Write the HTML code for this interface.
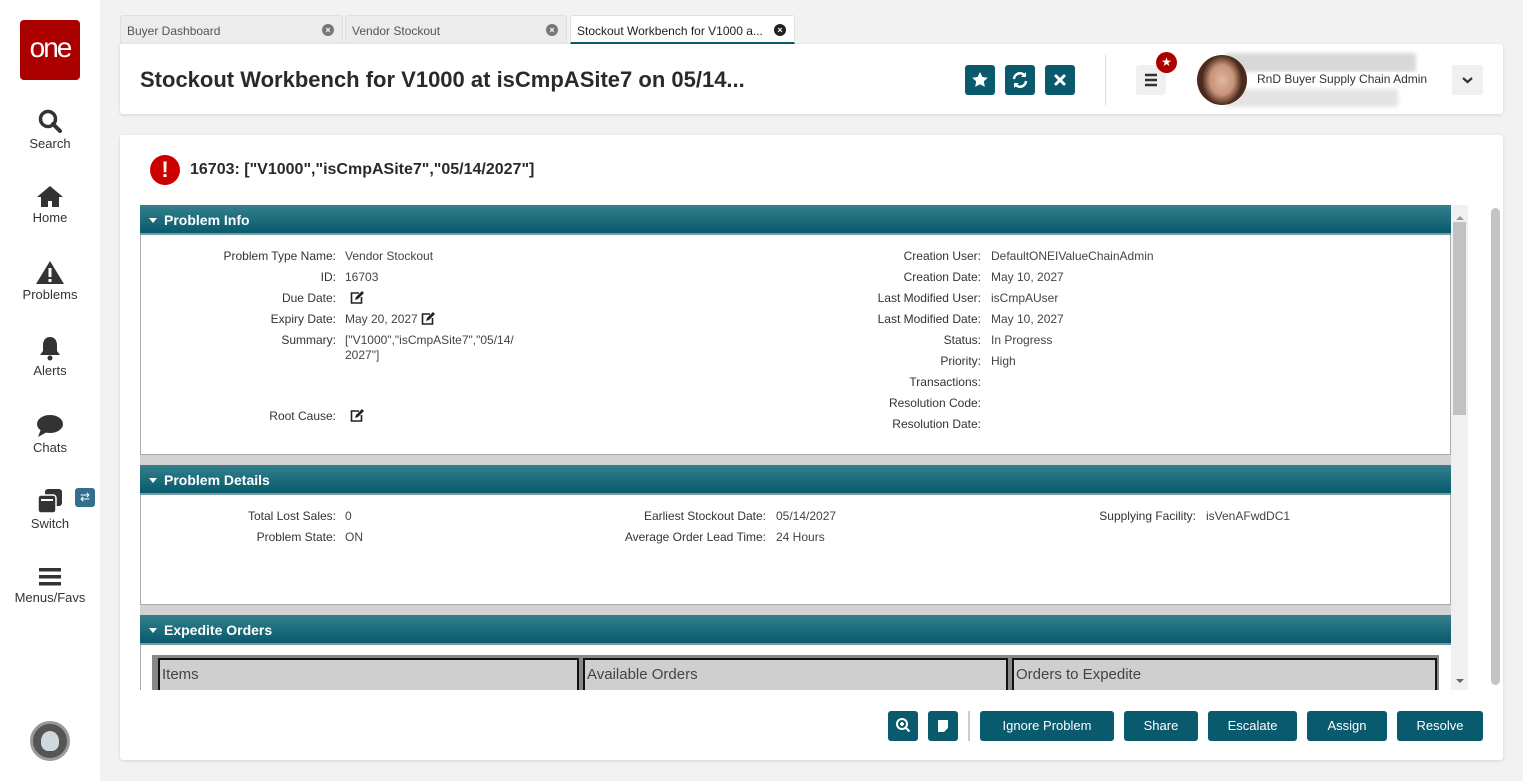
<!DOCTYPE html>
<html><head><meta charset="utf-8"><style>
*{box-sizing:border-box;margin:0;padding:0}
body{width:1523px;height:781px;background:#f2f2f2;font-family:"Liberation Sans",sans-serif;position:relative;overflow:hidden;color:#333}
.a{position:absolute}
.side{left:0;top:0;width:100px;height:781px;background:#fff}
.nav{position:absolute;left:0;width:100px;text-align:center;font-size:13px;color:#333}
.nav svg{display:block;margin:0 auto 2px}
.tab{top:15px;height:29px;background:#ececec;border:1px solid #e0e0e0;border-bottom:none;border-radius:3px 3px 0 0;font-size:12px;color:#555;padding:8px 6px}
.tx{position:absolute;right:8px;top:8px;width:12px;height:12px;border-radius:50%;background:#777;color:#fff;font-size:9px;line-height:12px;text-align:center;font-weight:bold}
.card{background:#fff;border-radius:3px;box-shadow:0 1px 3px rgba(0,0,0,.12)}
.tb{width:30px;height:30px;border-radius:3px;background:#0a5a6e;top:65px}
.hdr{left:140px;width:1311px;height:30px;background:linear-gradient(#34808c,#075a6d);color:#fff;font-size:14px;font-weight:bold;padding:7px 0 0 24px;border-bottom:2px solid #7a9aa2}
.hdr:before{content:"";position:absolute;left:9px;top:13px;border:4px solid transparent;border-top:5px solid #fff}
.body{left:140px;width:1311px;background:#fff;border:1px solid #aaa;border-top:none}
.gap{left:140px;width:1311px;background:#d3d3d3}
.l{position:absolute;width:300px;font-size:12px;color:#333;text-align:right;white-space:nowrap}
.v{position:absolute;font-size:12px;color:#444;white-space:nowrap}
.btn{top:711px;height:30px;background:#0a5a6e;color:#fff;font-size:13px;border-radius:3px;text-align:center;line-height:30px}
.cell{top:658px;height:32px;background:#cfcfcf;border:2px solid #111;border-bottom:none;font-size:15px;color:#444;padding:6px 0 0 2px}
.ed{display:inline-block;vertical-align:-2px}
</style></head><body>
<div class="a side"></div>
<div class="a" style="left:20px;top:20px;width:60px;height:60px;background:#a00;border-radius:4px;color:#fff;font-size:28px;text-align:center;line-height:56px;letter-spacing:-2px">one</div>
<div class="nav" style="top:108px"><svg width="26" height="26" viewBox="0 0 26 26"><circle cx="11" cy="11" r="7.5" fill="none" stroke="#333" stroke-width="3.5"/><path d="M16 16l7 7" stroke="#333" stroke-width="4" stroke-linecap="round"/></svg>Search</div>
<div class="nav" style="top:184px"><svg width="28" height="24" viewBox="0 0 28 24"><path d="M14 2L1 13h4v10h7v-6h4v6h7V13h4z" fill="#333"/></svg>Home</div>
<div class="nav" style="top:260px"><svg width="30" height="25" viewBox="0 0 30 25"><path d="M15 1L1 24h28z" fill="#333"/><rect x="13.5" y="8" width="3" height="9" fill="#fff"/><rect x="13.5" y="19" width="3" height="3" fill="#fff"/></svg>Problems</div>
<div class="nav" style="top:336px"><svg width="24" height="25" viewBox="0 0 24 25"><path d="M12 1c-5 0-7 4-7 8v6l-3 4h20l-3-4V9c0-4-2-8-7-8z" fill="#333"/><circle cx="12" cy="22" r="2.5" fill="#333"/></svg>Alerts</div>
<div class="nav" style="top:414px"><svg width="28" height="24" viewBox="0 0 28 24"><ellipse cx="14" cy="10" rx="13" ry="9" fill="#333"/><path d="M5 15l-3 8 9-5z" fill="#333"/></svg>Chats</div>
<div class="nav" style="top:488px"><svg width="28" height="26" viewBox="0 0 28 26"><rect x="9" y="1" width="17" height="17" rx="3" fill="#333"/><rect x="2" y="7" width="18" height="18" rx="3" fill="#333" stroke="#fff" stroke-width="1.5"/><rect x="5" y="11" width="12" height="2" fill="#fff"/></svg>Switch</div>
<div class="a" style="left:75px;top:488px;width:20px;height:19px;background:#336e8c;border-radius:3px;color:#fff;font-size:12px;text-align:center;line-height:19px">⇄</div>
<div class="nav" style="top:566px"><svg width="24" height="22" viewBox="0 0 24 22"><rect x="1" y="2" width="22" height="3.5" fill="#333"/><rect x="1" y="9" width="22" height="3.5" fill="#333"/><rect x="1" y="16" width="22" height="3.5" fill="#333"/></svg>Menus/Favs</div>
<div class="a" style="left:30px;top:721px;width:40px;height:40px;border-radius:50%;background:#555;border:3px solid #999"><div style="margin:7px auto;width:18px;height:20px;border-radius:50% 50% 40% 40%;background:#cfd8dc"></div></div>

<div class="a tab" style="left:120px;width:223px">Buyer Dashboard<span class="tx">×</span></div>
<div class="a tab" style="left:345px;width:222px">Vendor Stockout<span class="tx">×</span></div>
<div class="a tab" style="left:570px;width:225px;background:#fff;color:#222;border-bottom:2px solid #0a5a6e">Stockout Workbench for V1000 a...<span class="tx" style="background:#222">×</span></div>

<div class="a card" style="left:120px;top:44px;width:1383px;height:70px;border-radius:0 3px 3px 3px"></div>
<div class="a" style="left:140px;top:67px;font-size:22px;font-weight:bold;color:#2a2a2a">Stockout Workbench for V1000 at isCmpASite7 on 05/14...</div>
<div class="a tb" style="left:965px"><svg width="30" height="30" viewBox="0 0 30 30"><path d="M15 7l2.4 5 5.4.7-4 3.7 1 5.4-4.8-2.6-4.8 2.6 1-5.4-4-3.7 5.4-.7z" fill="#fff"/></svg></div>
<div class="a tb" style="left:1005px"><svg width="30" height="30" viewBox="0 0 30 30"><path d="M9 14a6 6 0 0 1 11-3M21 16a6 6 0 0 1-11 3" fill="none" stroke="#fff" stroke-width="2.5"/><path d="M21 7v5h-5zM9 23v-5h5z" fill="#fff"/></svg></div>
<div class="a tb" style="left:1045px"><svg width="30" height="30" viewBox="0 0 30 30"><path d="M11 11l8 8M19 11l-8 8" stroke="#fff" stroke-width="3" stroke-linecap="round"/></svg></div>
<div class="a" style="left:1105px;top:55px;width:1px;height:50px;background:#ddd"></div>
<div class="a" style="left:1136px;top:65px;width:30px;height:30px;background:#f0f0f0;border-radius:3px"><svg width="30" height="30" viewBox="0 0 30 30"><path d="M9 10h12M9 15h12M9 20h12" stroke="#333" stroke-width="2.5"/></svg></div>
<div class="a" style="left:1156px;top:52px;width:21px;height:21px;border-radius:50%;background:#a00;color:#fff;font-size:12px;text-align:center;line-height:21px">★</div>
<div class="a" style="left:1226px;top:53px;width:190px;height:19px;background:#d8d8d8;filter:blur(2px)"></div>
<div class="a" style="left:1226px;top:89px;width:172px;height:18px;background:#e4e4e4;filter:blur(2px)"></div>
<div class="a" style="left:1197px;top:55px;width:50px;height:50px;border-radius:50%;background:radial-gradient(ellipse 40% 50% at 50% 50%,#e2b8a0 0,#c89278 60%,#4a2a1c 100%)"></div>
<div class="a" style="left:1257px;top:72px;font-size:12px;color:#333;background:#fff">RnD Buyer Supply Chain Admin</div>
<div class="a" style="left:1452px;top:65px;width:31px;height:30px;background:#f0f0f0;border-radius:3px"><svg width="31" height="30" viewBox="0 0 31 30"><path d="M11 13l4.5 4 4.5-4" fill="none" stroke="#333" stroke-width="2.2"/></svg></div>

<div class="a card" style="left:120px;top:135px;width:1383px;height:625px"></div>
<div class="a" style="left:150px;top:155px;width:30px;height:30px;border-radius:50%;background:#c00;color:#fff;font-size:22px;font-weight:bold;text-align:center;line-height:30px">!</div>
<div class="a" style="left:190px;top:161px;font-size:16px;font-weight:bold;color:#2a2a2a">16703: ["V1000","isCmpASite7","05/14/2027"]</div>

<div class="a hdr" style="top:205px">Problem Info</div>
<div class="a body" style="top:235px;height:220px"></div>
<div class="a gap" style="top:455px;height:10px"></div>
<div class="a hdr" style="top:465px">Problem Details</div>
<div class="a body" style="top:495px;height:110px"></div>
<div class="a gap" style="top:605px;height:10px"></div>
<div class="a hdr" style="top:615px">Expedite Orders</div>
<div class="a" style="left:140px;top:645px;width:1311px;height:45px;background:#fff;border-left:1px solid #aaa"></div>
<div class="a" style="left:152px;top:655px;width:1287px;height:35px;background:#888"></div>
<div class="a cell" style="left:158px;width:421px">Items</div>
<div class="a cell" style="left:583px;width:425px">Available Orders</div>
<div class="a cell" style="left:1012px;width:425px">Orders to Expedite</div>
<div class="a" style="left:1451px;top:205px;width:17px;height:485px;background:#f0f0f0"></div>
<div class="a" style="left:1453px;top:222px;width:13px;height:193px;background:#c1c1c1"></div>
<div class="a" style="left:1456px;top:212px;border:4px solid transparent;border-bottom:4px solid #999"></div>
<div class="a" style="left:1456px;top:679px;border:4px solid transparent;border-top:4px solid #666"></div>
<div class="a" style="left:1491px;top:208px;width:9px;height:477px;background:#c4c4c4;border-radius:5px"></div>

<div class="l" style="left:36px;top:249px">Problem Type Name:</div><div class="v" style="left:345px;top:249px">Vendor Stockout</div>
<div class="l" style="left:36px;top:270px">ID:</div><div class="v" style="left:345px;top:270px">16703</div>
<div class="l" style="left:36px;top:291px">Due Date:</div><div class="v" style="left:350px;top:291px"><svg class="ed" width="14" height="13" viewBox="0 0 14 13"><path d="M9 2H1.5v10h10V6" fill="none" stroke="#222" stroke-width="1.6"/><path d="M5 9l1-3 6-6 2 2-6 6z" fill="#222"/></svg></div>
<div class="l" style="left:36px;top:312px">Expiry Date:</div><div class="v" style="left:345px;top:312px">May 20, 2027 <svg class="ed" width="14" height="13" viewBox="0 0 14 13"><path d="M9 2H1.5v10h10V6" fill="none" stroke="#222" stroke-width="1.6"/><path d="M5 9l1-3 6-6 2 2-6 6z" fill="#222"/></svg></div>
<div class="l" style="left:36px;top:333px">Summary:</div><div class="v" style="left:345px;top:333px;line-height:15px">["V1000","isCmpASite7","05/14/<br>2027"]</div>
<div class="l" style="left:36px;top:409px">Root Cause:</div><div class="v" style="left:350px;top:409px"><svg class="ed" width="14" height="13" viewBox="0 0 14 13"><path d="M9 2H1.5v10h10V6" fill="none" stroke="#222" stroke-width="1.6"/><path d="M5 9l1-3 6-6 2 2-6 6z" fill="#222"/></svg></div>
<div class="l" style="left:681px;top:249px">Creation User:</div><div class="v" style="left:991px;top:249px">DefaultONEIValueChainAdmin</div>
<div class="l" style="left:681px;top:270px">Creation Date:</div><div class="v" style="left:991px;top:270px">May 10, 2027</div>
<div class="l" style="left:681px;top:291px">Last Modified User:</div><div class="v" style="left:991px;top:291px">isCmpAUser</div>
<div class="l" style="left:681px;top:312px">Last Modified Date:</div><div class="v" style="left:991px;top:312px">May 10, 2027</div>
<div class="l" style="left:681px;top:333px">Status:</div><div class="v" style="left:991px;top:333px">In Progress</div>
<div class="l" style="left:681px;top:354px">Priority:</div><div class="v" style="left:991px;top:354px">High</div>
<div class="l" style="left:681px;top:375px">Transactions:</div>
<div class="l" style="left:681px;top:396px">Resolution Code:</div>
<div class="l" style="left:681px;top:417px">Resolution Date:</div>
<div class="l" style="left:36px;top:509px">Total Lost Sales:</div><div class="v" style="left:345px;top:509px">0</div>
<div class="l" style="left:36px;top:530px">Problem State:</div><div class="v" style="left:345px;top:530px">ON</div>
<div class="l" style="left:466px;top:509px">Earliest Stockout Date:</div><div class="v" style="left:776px;top:509px">05/14/2027</div>
<div class="l" style="left:466px;top:530px">Average Order Lead Time:</div><div class="v" style="left:776px;top:530px">24 Hours</div>
<div class="l" style="left:896px;top:509px">Supplying Facility:</div><div class="v" style="left:1206px;top:509px">isVenAFwdDC1</div>

<div class="a btn" style="left:888px;width:30px"><svg width="30" height="30" viewBox="0 0 30 30"><circle cx="14" cy="13" r="5" fill="none" stroke="#fff" stroke-width="2"/><path d="M17.5 16.5l4 4M12 13h4M14 11v4" stroke="#fff" stroke-width="2"/></svg></div>
<div class="a btn" style="left:928px;width:30px"><svg width="30" height="30" viewBox="0 0 30 30"><path d="M10 9h10v8l-4 4h-6z" fill="#fff"/></svg></div>
<div class="a" style="left:968px;top:711px;width:2px;height:30px;background:#ccc"></div>
<div class="a btn" style="left:980px;width:134px">Ignore Problem</div>
<div class="a btn" style="left:1124px;width:74px">Share</div>
<div class="a btn" style="left:1208px;width:89px">Escalate</div>
<div class="a btn" style="left:1307px;width:80px">Assign</div>
<div class="a btn" style="left:1397px;width:86px">Resolve</div>
</body></html>
